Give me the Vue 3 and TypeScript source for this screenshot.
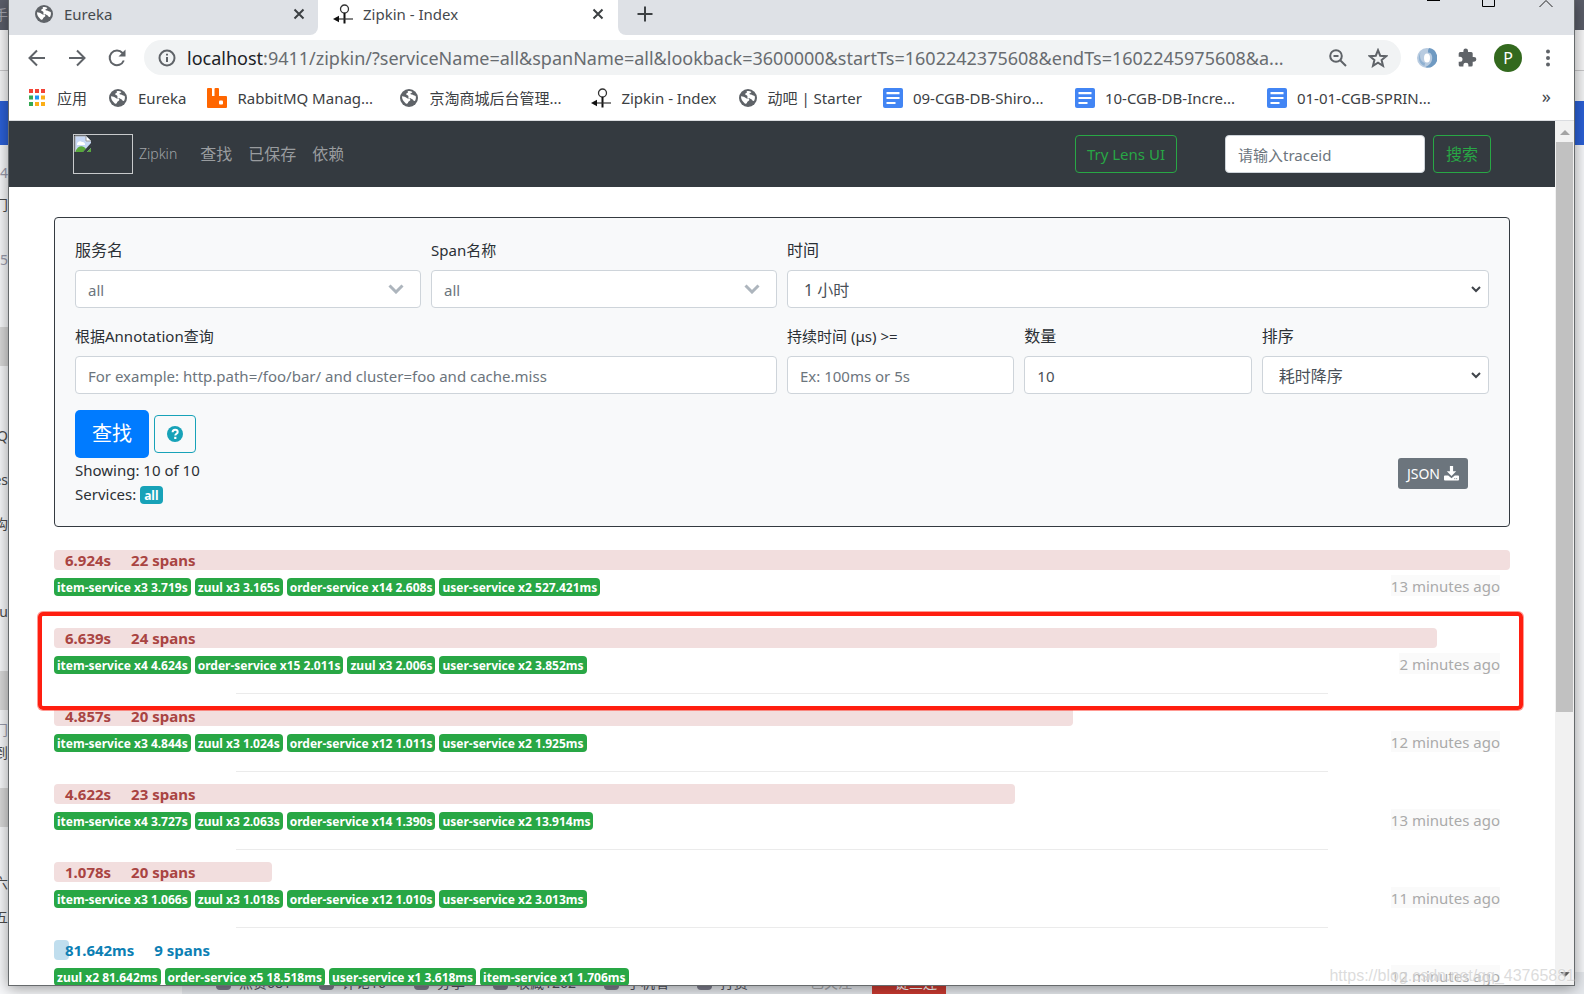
<script setup lang="ts">
import { ref } from 'vue'

interface Bookmark { icon: 'apps' | 'globe' | 'rabbit' | 'zipkin' | 'docs'; title: string; clipped?: boolean }
interface Trace { duration: string; spans: number; width: number; tone: 'slow' | 'fast'; services: string[]; ago: string }

const bookmarks: Bookmark[] = [
  { icon: 'apps', title: '应用' },
  { icon: 'globe', title: 'Eureka' },
  { icon: 'rabbit', title: 'RabbitMQ Manag...', clipped: true },
  { icon: 'globe', title: '京淘商城后台管理...', clipped: true },
  { icon: 'zipkin', title: 'Zipkin - Index' },
  { icon: 'globe', title: '动吧 | Starter' },
  { icon: 'docs', title: '09-CGB-DB-Shiro...', clipped: true },
  { icon: 'docs', title: '10-CGB-DB-Incre...', clipped: true },
  { icon: 'docs', title: '01-01-CGB-SPRIN...', clipped: true },
]

const traces: Trace[] = [
  { duration: '6.924s', spans: 22, width: 100, tone: 'slow', ago: '13 minutes ago',
    services: ['item-service x3 3.719s', 'zuul x3 3.165s', 'order-service x14 2.608s', 'user-service x2 527.421ms'] },
  { duration: '6.639s', spans: 24, width: 95, tone: 'slow', ago: '2 minutes ago',
    services: ['item-service x4 4.624s', 'order-service x15 2.011s', 'zuul x3 2.006s', 'user-service x2 3.852ms'] },
  { duration: '4.857s', spans: 20, width: 70, tone: 'slow', ago: '12 minutes ago',
    services: ['item-service x3 4.844s', 'zuul x3 1.024s', 'order-service x12 1.011s', 'user-service x2 1.925ms'] },
  { duration: '4.622s', spans: 23, width: 66, tone: 'slow', ago: '13 minutes ago',
    services: ['item-service x4 3.727s', 'zuul x3 2.063s', 'order-service x14 1.390s', 'user-service x2 13.914ms'] },
  { duration: '1.078s', spans: 20, width: 15, tone: 'slow', ago: '11 minutes ago',
    services: ['item-service x3 1.066s', 'zuul x3 1.018s', 'order-service x12 1.010s', 'user-service x2 3.013ms'] },
  { duration: '81.642ms', spans: 9, width: 1, tone: 'fast', ago: '12 minutes ago',
    services: ['zuul x2 81.642ms', 'order-service x5 18.518ms', 'user-service x1 3.618ms', 'item-service x1 1.706ms'] },
]

/* Pieces of the page behind the browser window that stay visible at its left edge. */
const behind = [
  { y: 4, text: '手', tone: 'pale' }, { y: 162, text: '04', tone: 'grey' }, { y: 194, text: '门', tone: 'dark' },
  { y: 249, text: '5', tone: 'grey' }, { y: 425, text: 'Q', tone: 'dark' }, { y: 469, text: 'es', tone: 'dark' },
  { y: 513, text: '构', tone: 'dark' }, { y: 601, text: 'ou', tone: 'dark' }, { y: 719, text: '门', tone: 'grey' },
  { y: 742, text: '到', tone: 'dark' }, { y: 872, text: '六', tone: 'dark' }, { y: 906, text: '五', tone: 'dark' },
]
const shades = [327, 671, 788]

const serviceName = ref('all')
const spanName = ref('all')
const lookback = ref('1h')
const annotation = ref('')
const duration = ref('')
const limit = ref('10')
const order = ref('desc')
const traceId = ref('')
</script>

<template>
  <div class="desktop">
    <svg class="sprite" aria-hidden="true">
      <symbol id="globe" viewBox="0 0 20 20">
        <circle cx="10" cy="10" r="9" fill="#5f6368" />
        <path d="M3 8.200c2 .2 3.400.6 4.800 1.800 1 .9 2.600.3 3.400 1.300.7 1-.6 1.500-1.500 2.200-.8.700-.5 1.600-1.400 2.100-1 .5-1.600-.5-2.400-1.200C4.400 13.200 2.900 11 3 8.200z" fill="#fff" />
        <path d="M8.600 3.200c1.800-.6 3.400-.3 4.800.7-.3 1-1.500.8-2 1.700-.4.900.9.900 1.700.9.900 0 1.200 1 2.200 1 .7 0 1.100.2 1.500.7.3 1.800 0 3.400-.9 4.700-1.500.2-1.800-1.400-2.900-1.900-1-.5-2.500.2-3.300-.8-.8-1.100.2-1.700-.5-2.500-.6-.7-2-.4-2-1.600 0-1 1.700-1 1.800-1.800 0-.400-.400-.700-.400-1.100z" fill="#fff" />
      </symbol>
      <symbol id="zipkin" viewBox="0 0 20 20">
        <circle cx="11.500" cy="5" r="4" fill="none" stroke="#333" stroke-width="1.300" />
        <path d="M11.500 9v10.500" stroke="#111" stroke-width="2" />
        <path d="M4 15h16" stroke="#333" stroke-width="1.200" />
        <path d="M0 15l6-3.200v6.400z" fill="#111" />
      </symbol>
      <symbol id="apps" viewBox="0 0 20 20">
        <path d="M2 1h4v4H2zM8 1h4v4H8zM14 1h4v4h-4z" fill="#f44336" />
        <path d="M2 7.500h4v4H2zM2 14h4v4H2z" fill="#34a853" />
        <path d="M8 7.500h4v4H8z" fill="#2196f3" />
        <path d="M14 7.500h4v4h-4zM8 14h4v4H8zM14 14h4v4h-4z" fill="#fbae17" />
      </symbol>
      <symbol id="rabbit" viewBox="0 0 20 20">
        <path d="M0 1q0-1 1-1h3q1 0 1 1v7h2.500V1q0-1 1-1h2.500q1 0 1 1v7h7q1 0 1 1v10q0 1-1 1H1q-1 0-1-1z" fill="#f60" />
        <rect x="12" y="12.500" width="4" height="4" rx="1" fill="#fff" />
      </symbol>
      <symbol id="docs" viewBox="0 0 20 20">
        <rect width="20" height="20" rx="2" fill="#4285f4" />
        <path d="M3.500 5.200h13M3.500 10h13M3.500 15h9" stroke="#fff" stroke-width="2.200" />
      </symbol>
    </svg>

    <div class="backdrop" aria-hidden="true">
      <div class="band band-dark"></div>
      <div class="band band-light"></div>
      <div class="band band-tabs"></div>
      <div class="band band-blue"></div>
      <div class="band band-rest"></div>
      <i v-for="y in shades" :key="y" class="shade" :style="{ top: y + 'px' }"></i>
      <span v-for="b in behind" :key="b.y" class="fragment" :class="b.tone" :style="{ top: b.y + 'px' }">{{ b.text }}</span>
      <div class="actions">
        <span class="act"><i></i>点赞681</span>
        <span class="act"><i></i>评论16</span>
        <span class="act"><i></i>分享</span>
        <span class="act"><i></i>收藏1262</span>
        <span class="act"><i></i>手机看</span>
        <span class="act"><i></i>打赏</span>
        <span class="followed">已关注</span>
        <span class="triple">一键三连</span>
      </div>
    </div>

    <main class="window">
      <header class="tabs">
        <div class="tab-idle">
          <svg class="ico"><use href="#globe" /></svg>
          <span class="tab-title">Eureka</span>
          <button class="close" aria-label="关闭 Eureka"><svg viewBox="0 0 12 12"><path d="M1.500 1.500l9 9M10.500 1.500l-9 9" /></svg></button>
        </div>
        <div class="tab-active">
          <svg class="ico"><use href="#zipkin" /></svg>
          <span class="tab-title">Zipkin - Index</span>
          <button class="close" aria-label="关闭 Zipkin"><svg viewBox="0 0 12 12"><path d="M1.500 1.500l9 9M10.500 1.500l-9 9" /></svg></button>
        </div>
        <div class="strip">
          <button class="plus" aria-label="新标签页"><svg viewBox="0 0 16 16"><path d="M8 .5v15M.5 8h15" /></svg></button>
          <svg class="controls" viewBox="0 0 134 9" aria-label="窗口控制">
            <path d="M7 .5h13" stroke="#000" />
            <path d="M62.500 0v6.500h12V0" fill="none" stroke="#000" />
            <path d="M119.500 7l6.500-6.500L132.500 7" fill="none" stroke="#222" />
          </svg>
        </div>
      </header>

      <div class="toolbar">
        <button aria-label="后退"><svg viewBox="0 0 20 20"><path class="line" d="M18 10H3M10 2.500L2.500 10l7.500 7.500" /></svg></button>
        <button aria-label="前进"><svg viewBox="0 0 20 20"><path class="line" d="M2 10h15M10 2.500l7.500 7.500-7.500 7.500" /></svg></button>
        <button aria-label="刷新"><svg viewBox="0 0 20 20"><path class="line" d="M16.800 12.500A7.300 7.300 0 1 1 15.500 5l2 2" /><path d="M18.500 1.500v7h-7z" fill="#5f6368" /></svg></button>
        <div class="omnibox">
          <svg viewBox="0 0 20 20"><circle class="line" cx="10" cy="10" r="7.500" /><path class="line" d="M10 9v5M10 5.700v1.800" /></svg>
          <span class="url"><b>localhost</b>:9411/zipkin/?serviceName=all&amp;spanName=all&amp;lookback=3600000&amp;startTs=1602242375608&amp;endTs=1602245975608&amp;a...</span>
          <button aria-label="缩放"><svg viewBox="0 0 20 20"><circle class="line" cx="8" cy="8" r="5.800" /><path class="line" d="M12.200 12.200l5.800 5.800M5.500 8h5" /></svg></button>
          <button aria-label="收藏"><svg viewBox="0 0 20 20"><path class="line" d="M10 2.200l2.200 5.500 5.900.5-4.500 3.900 1.400 5.700-5-3.100-5 3.100 1.400-5.700-4.500-3.900 5.900-.5z" /></svg></button>
        </div>
        <button aria-label="扩展"><svg viewBox="0 0 20 20"><circle cx="10" cy="10" r="10" fill="#b8cbe0" /><path d="M12 0a10 10 0 0 1 3 18.700c-2.500 1.300-5 1-6.500.2C13 17 16 13 15 8c-.5-2.500-2-3.500-4-3.500C11 3 11 1.500 12 0z" fill="#6f9ac2" /><path d="M4 4C2 7 3 14 8 15l-.5 3C2 16 0 9 4 4z" fill="#8fb1d2" /><ellipse cx="10" cy="10" rx="3" ry="4.500" fill="#fff" /></svg></button>
        <button aria-label="扩展程序"><svg viewBox="0 0 20 20"><path d="M17 9h-1.300V5.500A1.500 1.500 0 0 0 14.200 4H11V2.800a2.300 2.300 0 0 0-4.600 0V4H3.200a1.500 1.500 0 0 0-1.500 1.500v3.200H3a2.500 2.500 0 0 1 0 5H1.700V17a1.500 1.500 0 0 0 1.500 1.500h3.200v-1.200a2.500 2.500 0 0 1 5 0v1.200h2.800a1.500 1.500 0 0 0 1.500-1.500v-3.300H17A2.300 2.300 0 0 0 17 9z" fill="#5f6368" /></svg></button>
        <button class="avatar">P</button>
        <button aria-label="菜单"><svg viewBox="0 0 20 20"><g fill="#5f6368"><circle cx="10" cy="3.500" r="2" /><circle cx="10" cy="10" r="2" /><circle cx="10" cy="16.500" r="2" /></g></svg></button>
      </div>

      <nav class="bookmarks">
        <a v-for="b in bookmarks" :key="b.title" href="#" class="bookmark">
          <svg class="ico"><use :href="'#' + b.icon" /></svg>
          <span :class="{ clipped: b.clipped }">{{ b.title }}</span>
        </a>
        <button class="more" aria-label="更多书签">»</button>
      </nav>

      <div class="viewport">
        <div class="page">
          <nav class="navbar">
            <svg class="broken" viewBox="0 0 60 40" aria-label="Zipkin">
              <rect x=".5" y=".5" width="59" height="39" fill="none" stroke="#c8cacc" />
              <path d="M2 2h11l5 5v11H2z" fill="#c6d7f5" />
              <path d="M4 10a3 3 0 0 1 5-2 2.500 2.500 0 0 1 3 3H4z" fill="#fff" />
              <path d="M2 18c3-7 8-7 11-3l-3 3z" fill="#58a83c" />
              <path d="M13 2v5h5" fill="#fff" stroke="#999" />
              <path d="M2 18V2h11M12 18l6-7" fill="none" stroke="#aaa" />
              <path d="M18 9v5l-4 4h-4z" fill="#343a40" />
              <path d="M14 18l4-4v4z" fill="#58a83c" />
            </svg>
            <a class="brand" href="#">Zipkin</a>
            <a class="link" href="#">查找</a>
            <a class="link" href="#">已保存</a>
            <a class="link" href="#">依赖</a>
            <button class="outline lens">Try Lens UI</button>
            <input v-model="traceId" class="control trace-id" type="text" placeholder="请输入traceid" aria-label="traceid">
            <button class="outline cjk">搜索</button>
          </nav>

          <form class="panel" @submit.prevent>
            <div class="field w3">
              <label class="cjk" for="service">服务名</label>
              <div class="pick chosen">
                <select id="service" v-model="serviceName" class="control"><option value="all">all</option></select>
                <svg viewBox="0 0 16 10"><path d="M1.500 1.500L8 8l6.500-6.500" /></svg>
              </div>
            </div>
            <div class="field w3">
              <label for="span">Span名称</label>
              <div class="pick chosen">
                <select id="span" v-model="spanName" class="control"><option value="all">all</option></select>
                <svg viewBox="0 0 16 10"><path d="M1.500 1.500L8 8l6.500-6.500" /></svg>
              </div>
            </div>
            <div class="field w6">
              <label class="cjk" for="lookback">时间</label>
              <div class="pick menu">
                <select id="lookback" v-model="lookback" class="control cjk"><option value="1h">1 小时</option></select>
                <svg viewBox="0 0 12 8"><path d="M2 2l4 4 4-4" /></svg>
              </div>
            </div>
            <div class="field w6">
              <label for="annotation">根据Annotation查询</label>
              <input id="annotation" v-model="annotation" class="control" type="text" placeholder="For example: http.path=/foo/bar/ and cluster=foo and cache.miss">
            </div>
            <div class="field w2">
              <label for="duration">持续时间 (μs) &gt;=</label>
              <input id="duration" v-model="duration" class="control" type="text" placeholder="Ex: 100ms or 5s">
            </div>
            <div class="field w2">
              <label class="cjk" for="limit">数量</label>
              <input id="limit" v-model="limit" class="control" type="text">
            </div>
            <div class="field w2">
              <label class="cjk" for="order">排序</label>
              <div class="pick menu">
                <select id="order" v-model="order" class="control cjk"><option value="desc">耗时降序</option></select>
                <svg viewBox="0 0 12 8"><path d="M2 2l4 4 4-4" /></svg>
              </div>
            </div>
            <div class="buttons">
              <button class="find" type="submit">查找</button>
              <button class="help" type="button" aria-label="帮助">
                <svg viewBox="0 0 16 16"><circle cx="8" cy="8" r="8" fill="#17a2b8" /><path d="M5.600 6.200C5.600 4.500 6.700 3.700 8.100 3.700s2.600.9 2.600 2.200c0 1.900-2.400 1.900-2.400 3.700" fill="none" stroke="#fff" stroke-width="2" /><path d="M7.200 10.800h2.200V13H7.200z" fill="#fff" /></svg>
              </button>
            </div>
            <div class="summary">
              <div>
                <p>Showing: 10 of 10</p>
                <p>Services: <span class="all">all</span></p>
              </div>
              <button class="json" type="button">JSON
                <svg viewBox="0 0 16 16"><path d="M6.300 0h3.400v5.500H13L8 10.700 3 5.500h3.300z" fill="#fff" /><path d="M0 11q0-1 1-1h3.500L8 13l3.500-3H15q1 0 1 1v3.500q0 1-1 1H1q-1 0-1-1z" fill="#fff" /><path d="M11 13.500h1M13 13.500h1" stroke="#6c757d" /></svg>
              </button>
            </div>
          </form>

          <section class="traces">
            <article v-for="(t, i) in traces" :key="i" class="trace">
              <div class="bar" :class="t.tone">
                <div class="fill" :style="{ width: t.width + '%' }"></div>
                <div class="bar-text"><span>{{ t.duration }}</span><span>{{ t.spans }} spans</span></div>
              </div>
              <div class="meta">
                <span v-for="s in t.services" :key="s" class="badge">{{ s }}</span>
                <time>{{ t.ago }}</time>
              </div>
              <hr>
              <div v-if="i === 1" class="highlight"></div>
            </article>
          </section>
        </div>
        <div class="scrollbar" aria-hidden="true">
          <svg viewBox="0 0 20 21"><path d="M5 14l5-5 5 5z" fill="#a3a3a3" /></svg>
          <div class="thumb"></div>
          <svg class="down" viewBox="0 0 20 21"><path d="M5 8l5 5 5-5z" fill="#505050" /></svg>
        </div>
      </div>
    </main>
    <div class="watermark">https://blog.csdn.net/qq_43765881</div>
  </div>
</template>

<style>
body { margin: 0; }
</style>

<style scoped>
* { box-sizing: border-box; }
.desktop {
  position: relative;
  height: 100vh;
  overflow: hidden;
  display: flex;
  padding: 0 9px 8px 8px;
  font: 15px/24px "Noto Sans", "Noto Sans CJK SC", sans-serif;
  color: #2b3035;
}
.sprite { position: absolute; width: 0; height: 0; }
button, input, select { font: inherit; margin: 0; }
button { cursor: pointer; }
a { text-decoration: none; }
p { margin: 0; }
.ico { width: 20px; height: 20px; flex: none; }

.backdrop { position: absolute; inset: 0; display: flex; flex-direction: column; background: #f3f4f5; }
.band-dark { height: 30px; background: #5a5d69; }
.band-light { height: 41px; background: #f7f7f8; border-bottom: 1px solid #c8c8ca; }
.band-tabs { height: 30px; background: #f4f5f6; }
.band-blue { height: 44px; background: #2b60d6; }
.band-rest { flex: 1; background: #f7f8fa; }
.shade { position: absolute; left: 0; width: 8px; height: 39px; background: #d8d8d8; }
.fragment { position: absolute; left: 0; width: 8px; overflow: hidden; direction: rtl; font-size: 14px; line-height: 22px; white-space: nowrap; }
.pale { color: #a2a4ad; }
.grey { color: #999aaa; }
.dark { color: #4d4d4d; }
.actions { position: absolute; left: 182px; right: 0; bottom: 0; height: 22px; display: flex; align-items: center; gap: 28px; padding-left: 34px; background: #e6e9ed; font-size: 14px; line-height: 22px; color: #4f505c; }
.act { display: flex; gap: 8px; align-items: center; }
.act i { width: 15px; height: 14px; border-radius: 4px; background: #7d7d8c; }
.followed { margin-left: 34px; color: #a5a7aa; }
.triple { margin-left: -8px; background: #cb3a31; color: #fff; padding: 0 9px; }

.window {
  position: relative;
  flex: 1;
  min-width: 0;
  display: flex;
  flex-direction: column;
  background: #fff;
  border: 1px solid #666a6c;
  border-top: 0;
  box-shadow: 0 2px 14px rgba(0, 0, 0, .4);
}
.tabs { display: flex; height: 35px; background: #fff; color: #45494d; }
.tab-idle, .tab-active { display: flex; align-items: center; padding-bottom: 7px; }
.tab-idle { width: 309px; padding-left: 25px; padding-right: 12px; gap: 10px; background: #dee1e6; border-radius: 0 0 8px 0; }
.tab-active { width: 300px; padding-left: 15px; padding-right: 13px; gap: 10px; }
.tab-title { flex: 1; }
.close, .plus { border: 0; background: none; padding: 0; display: grid; place-items: center; }
.close { width: 14px; height: 14px; }
.close svg { width: 12px; height: 12px; }
.plus svg { width: 16px; height: 16px; }
.close path, .plus path { stroke: #3c4043; stroke-width: 2; fill: none; }
.strip { flex: 1; display: flex; justify-content: space-between; align-items: flex-start; background: #dee1e6; border-radius: 0 0 0 8px; padding: 0 20px 0 19px; }
.plus { height: 28px; }
.controls { width: 134px; height: 9px; }

.toolbar { display: flex; align-items: center; height: 45px; gap: 20px; padding: 0 16px 0 18px; }
.toolbar button { border: 0; background: none; padding: 0; width: 20px; height: 20px; flex: none; }
.toolbar svg { width: 20px; height: 20px; display: block; flex: none; }
.line { fill: none; stroke: #5f6368; stroke-width: 2; }
.omnibox { flex: 1; min-width: 0; height: 35px; border-radius: 18px; background: #f1f3f4; display: flex; align-items: center; gap: 20px; padding: 0 13px; margin-right: -4px; margin-left: -3px; }
.url { flex: 1; min-width: 0; margin-left: -10px; overflow: hidden; white-space: nowrap; font-size: 18px; color: #686c70; }
.url b { font-weight: 400; color: #202124; }
.toolbar .avatar { width: 28px; height: 28px; margin: 0 -4px 0 -3px; border-radius: 50%; background: #33691e; color: #fff; font-size: 16px; line-height: 28px; }

.bookmarks { display: flex; align-items: center; height: 41px; padding: 0 23px 4px 18px; gap: 21px; border-bottom: 1px solid #dadce0; }
.bookmark { display: flex; align-items: center; gap: 10px; color: #3c4043; white-space: nowrap; }
.clipped { width: 141px; }
.more { margin-left: auto; border: 0; background: none; padding: 0 0 4px; font-size: 18px; color: #45494d; }

.viewport { flex: 1; min-height: 0; display: flex; }
.page { flex: 1; min-width: 0; overflow: hidden; }
.scrollbar { width: 19px; background: #f1f1f1; display: flex; flex-direction: column; align-items: center; }
.scrollbar svg { width: 20px; height: 21px; flex: none; }
.thumb { width: 17px; height: 66%; background: #c1c1c1; }
.down { margin-top: auto; }

.navbar { display: flex; align-items: center; height: 66px; padding: 0 64px; background: #343a40; }
.broken { width: 60px; height: 40px; }
.brand { margin: 0 23px 0 6px; font-weight: 300; font-size: 14px; color: #a0a3a6; }
.link { margin-right: 16px; font-size: 16px; color: #999c9f; }
.outline { height: 38px; padding: 0 12px; border: 1px solid #28a745; border-radius: 4px; background: none; color: #28a745; }
.cjk { font-size: 16px; }
.lens { margin-left: auto; margin-right: 48px; padding: 0 11px; }
.trace-id { width: 200px; margin-right: 8px; }

.control { display: block; height: 38px; padding: 7px 12px 5px; border: 1px solid #ced4da; border-radius: 4px; background-color: #fff; color: #495057; }
.control::placeholder { color: #6c757d; opacity: 1; }
.field .control { width: 100%; }
.panel { display: grid; grid-template-columns: repeat(12, 1fr); column-gap: 10px; row-gap: 16px; margin: 30px 45px 0; padding: 20px; border: 1px solid #343a40; border-radius: 4px; background: #f8f9fa; }
.field { min-width: 0; }
.field label { display: block; margin-bottom: 8px; height: 24px; }
.w2 { grid-column: span 2; }
.w3 { grid-column: span 3; }
.w6 { grid-column: span 6; }
.pick { display: grid; align-items: center; }
.pick > * { grid-area: 1 / 1; }
.pick select { appearance: none; }
.pick svg { justify-self: end; pointer-events: none; }
.pick path { fill: none; }
.chosen select { color: #6c757d; }
.chosen svg { width: 16px; height: 10px; margin-right: 17px; }
.chosen path { stroke: #adb5bd; stroke-width: 3; }
.menu select { padding-left: 16px; }
.menu svg { width: 12px; height: 8px; margin-right: 7px; }
.menu path { stroke: #3f444a; stroke-width: 2; }
.buttons { grid-column: 1 / -1; display: flex; align-items: center; gap: 5px; margin-bottom: -16px; }
.find { width: 74px; height: 48px; border: 0; border-radius: 5px; background: #007bff; color: #fff; font-size: 20px; }
.help { width: 42px; height: 38px; padding: 0; border: 1px solid #17a2b8; border-radius: 4px; background: none; display: grid; place-items: center; }
.help svg { width: 16px; height: 16px; }
.summary { grid-column: 1 / -1; display: flex; justify-content: space-between; align-items: flex-start; padding-right: 21px; }
.all, .badge { display: inline-block; height: 18px; border-radius: 4px; padding: 0 3px; font-weight: 700; font-size: 12px; line-height: 19px; color: #fff; white-space: nowrap; }
.all { padding: 0 4px; background: #17a2b8; }
.json { display: flex; align-items: center; gap: 4px; height: 31px; padding: 0 9px; border: 0; border-radius: 3px; background: #6c757d; color: #fff; font-size: 14px; }
.json svg { width: 15px; height: 15px; }

.traces { margin: 23px 45px 0; }
.trace { position: relative; padding-bottom: 12px; }
.bar { display: grid; height: 20px; font-weight: 700; }
.bar > * { grid-area: 1 / 1; height: 20px; }
.fill { border-radius: 4px; }
.bar-text { display: flex; gap: 20px; padding-left: 11px; line-height: 20px; }
.slow { color: #a94442; }
.slow .fill { background: #f2dede; }
.fast { color: #0c80b4; }
.fast .fill { background: #c0deee; }
.meta { display: flex; align-items: flex-end; gap: 4px; height: 21px; margin-top: 5px; padding-right: 10px; }
.badge { background: #28a745; }
time { margin-left: auto; height: 21px; line-height: 23px; color: #aaa; background: #fafafa; }
hr { width: 75%; height: 1px; margin: 19px auto 0; border: 0; background: #ebebeb; }
.highlight { position: absolute; z-index: 1; inset: -16px -13px -4px -16px; border: 4px solid #ff1e10; border-radius: 5px; box-shadow: 0 0 0 1px rgba(255, 30, 16, .45); }
.watermark { position: absolute; right: 9px; bottom: 8px; font: 16px/20px "Liberation Sans", sans-serif; color: rgba(190, 190, 190, .55); text-shadow: 0 0 2px #fff; }
</style>
